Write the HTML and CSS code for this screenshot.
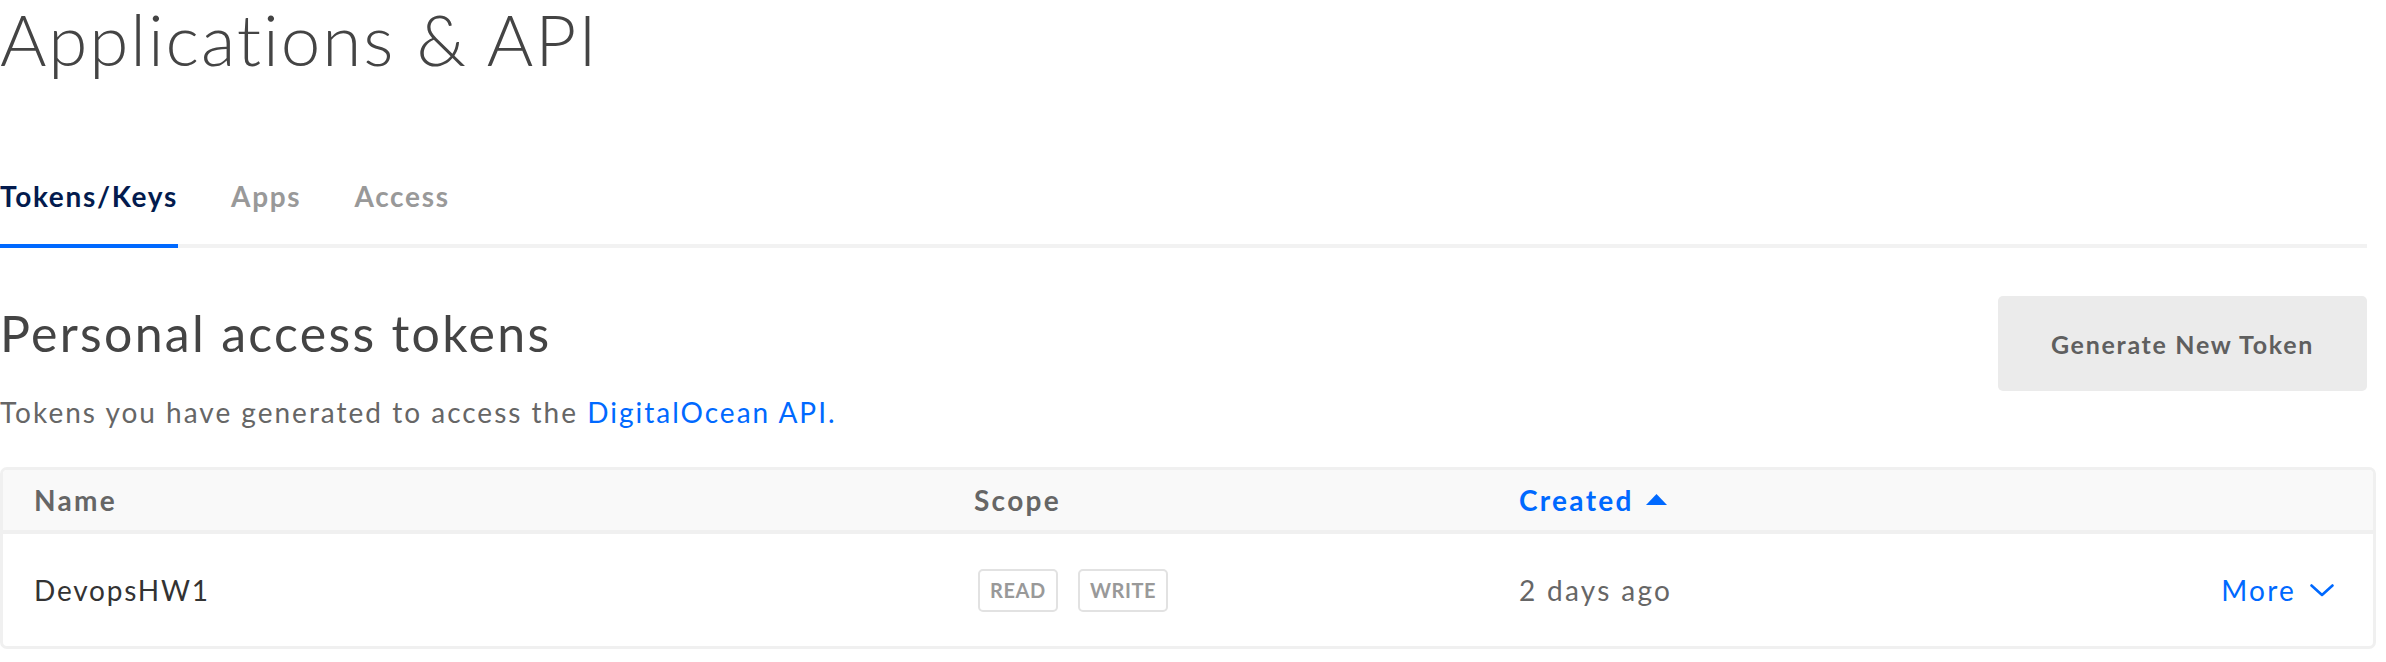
FILE: index.html
```html
<!DOCTYPE html>
<html lang="en">
<head>
<meta charset="utf-8">
<title>Applications &amp; API</title>
<link rel="stylesheet" href="styles.css">
</head>
<body>
<div class="page">
  <h1 class="title">Applications &amp; API</h1>

  <nav class="tabs">
    <a class="tab active">Tokens/Keys</a>
    <a class="tab">Apps</a>
    <a class="tab">Access</a>
  </nav>

  <section class="section-head">
    <div class="section-text">
      <h2 class="heading">Personal access tokens</h2>
      <p class="subtitle">Tokens you have generated to access the <a class="link">DigitalOcean API.</a></p>
    </div>
    <button class="btn">Generate New Token</button>
  </section>

  <div class="table">
    <div class="thead">
      <div class="cell">Name</div>
      <div class="cell">Scope</div>
      <div class="cell sorted">Created
        <svg class="sort-icon" width="21" height="11" viewBox="0 0 21 11"><polygon points="10.5,0 21,11 0,11" fill="#0069ff"/></svg>
      </div>
      <div class="cell"></div>
    </div>
    <div class="trow">
      <div class="cell name">DevopsHW1</div>
      <div class="cell scopes"><span class="badge">READ</span><span class="badge">WRITE</span></div>
      <div class="cell date">2 days ago</div>
      <div class="cell more">More
        <svg class="chev" width="24" height="13" viewBox="0 0 24 13"><polyline points="1.5,1.5 12,11 22.5,1.5" fill="none" stroke="#0069ff" stroke-width="2.6" stroke-linecap="round" stroke-linejoin="round"/></svg>
      </div>
    </div>
  </div>
</div>
</body>
</html>
```

FILE: styles.css
```css
* { box-sizing: border-box; }

html, body {
  margin: 0;
  padding: 0;
  background: #fff;
}

body {
  font-family: "Lato", "Liberation Sans", sans-serif;
  color: #444;
}

.page {
  width: 2367px;
}

.title {
  margin: 0;
  font-size: 71px;
  line-height: 77px;
  font-weight: 300;
  letter-spacing: 1.9px;
  color: #444;
}

.tabs {
  margin-top: 102px;
  display: flex;
  gap: 53px;
  border-bottom: 4px solid #f2f2f2;
}

.tab {
  display: block;
  font-size: 28px;
  line-height: 34px;
  font-weight: 700;
  letter-spacing: 1.7px;
  color: #999;
  padding-bottom: 31px;
  border-bottom: 4px solid transparent;
  margin-bottom: -4px;
}

.tab.active {
  color: #031b4e;
  border-bottom-color: #0069ff;
}

.section-head {
  margin-top: 48px;
  display: flex;
  justify-content: space-between;
  align-items: flex-start;
}

.heading {
  margin: 0;
  font-size: 50px;
  line-height: 75px;
  font-weight: 400;
  letter-spacing: 2.3px;
  color: #444;
}

.subtitle {
  margin: 21px 0 0;
  font-size: 28px;
  line-height: 40px;
  letter-spacing: 2px;
  color: #666;
}

.link {
  color: #0069ff;
}

.btn {
  width: 369px;
  height: 95px;
  border: 0;
  border-radius: 5px;
  background: #ebebeb;
  color: #5f5f5f;
  font-family: "Lato", "Liberation Sans", sans-serif;
  font-size: 25px;
  font-weight: 700;
  letter-spacing: 1.7px;
  padding: 0;
}

.table {
  margin-top: 35px;
  width: 2376px;
  border: 3px solid #f0f0f0;
  border-radius: 7px;
  overflow: hidden;
}

.thead, .trow {
  display: grid;
  grid-template-columns: 940px 545px 1fr auto;
  align-items: center;
}

.thead {
  height: 64px;
  background: #f9f9f9;
  border-bottom: 4px solid #f0f0f0;
}

.trow {
  height: 112px;
}

.cell {
  padding-left: 31px;
  font-size: 28px;
  line-height: 40px;
  letter-spacing: 1.8px;
}

.thead .cell {
  font-weight: 700;
  color: #666;
  line-height: 60px;
  letter-spacing: 2.3px;
}

.thead .cell.sorted {
  color: #0069ff;
  display: flex;
  align-items: center;
  gap: 12px;
}

.sort-icon {
  display: block;
  margin-top: -2px;
}

.name {
  color: #333;
}

.scopes {
  display: flex;
  gap: 20px;
  padding-left: 35px;
}

.badge {
  display: block;
  height: 43px;
  line-height: 39px;
  padding: 0 10px;
  border: 2px solid #e2e2e2;
  border-radius: 5px;
  font-size: 20px;
  font-weight: 700;
  letter-spacing: 0.6px;
  color: #999;
}

.date {
  color: #666;
  letter-spacing: 2.3px;
}

.more {
  color: #0069ff;
  display: flex;
  align-items: center;
  gap: 14px;
  padding-right: 39px;
  letter-spacing: 2.2px;
}

.chev {
  display: block;
}
```
